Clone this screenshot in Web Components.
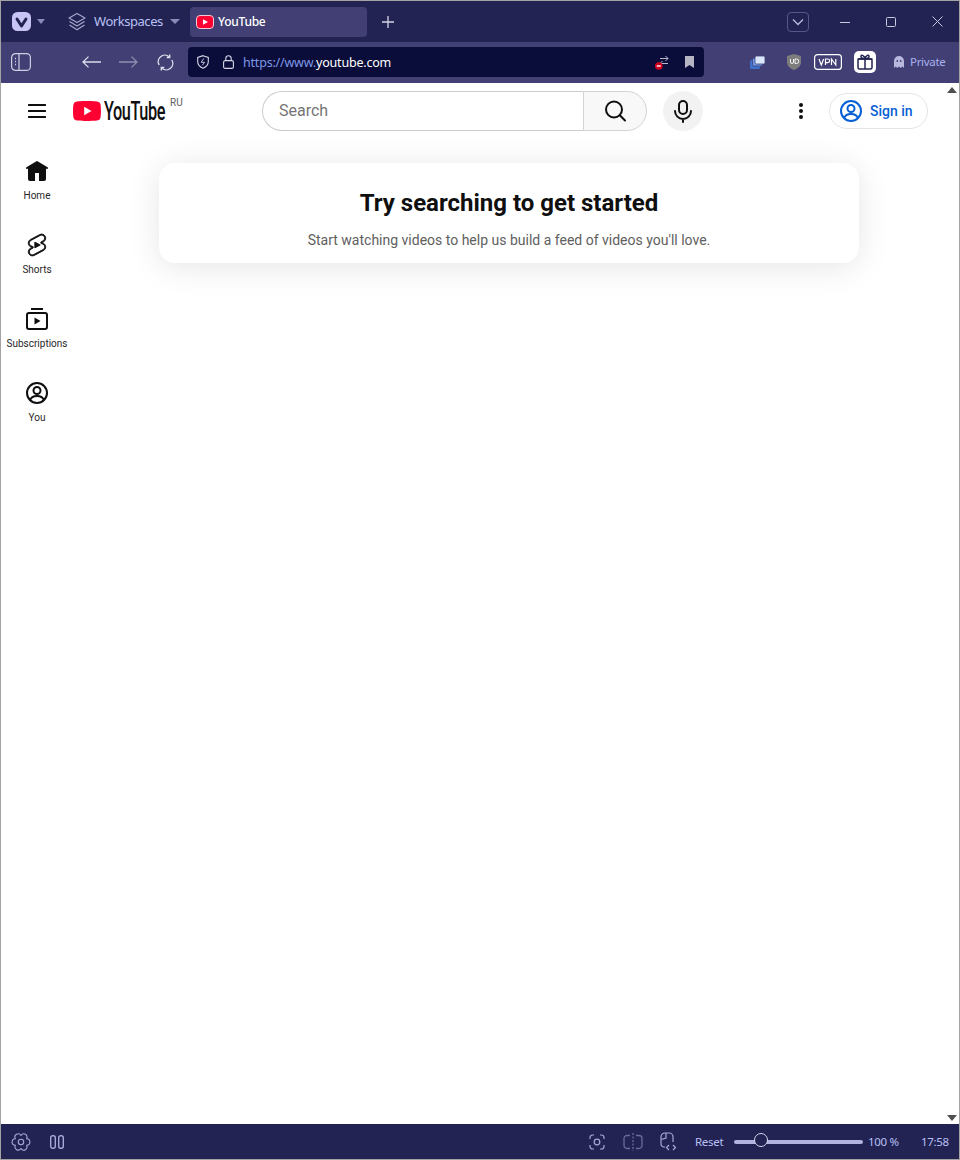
<!DOCTYPE html>
<html>
<head>
<meta charset="utf-8">
<title>YouTube</title>
<style>
  html, body { margin: 0; height: 100%; background: #fff; }
  browser-window { height: 1160px; }
</style>
</head>
<body>
<browser-window>
  <tab-bar slot="top"></tab-bar>
  <tool-bar slot="top"></tool-bar>
  <yt-page>
    <yt-masthead slot="head"></yt-masthead>
    <yt-guide slot="guide">
      <guide-item label="Home"><svg viewBox="0 0 24 24" fill="#0f0f0f"><path d="m11.485 2.143-8 4.8-2 1.2a1 1 0 001.03 1.714L3 9.567V20a2 2 0 002 2h5v-8h4v8h5a2 2 0 002-2V9.567l.485.29a1 1 0 001.03-1.714l-2-1.2-8-4.8a1 1 0 00-1.03 0Z"/></svg></guide-item>
      <guide-item label="Shorts"><svg viewBox="2.500 1 19 22" fill="#0f0f0f" stroke="#0f0f0f" stroke-width=".8"><path d="M10 14.65v-5.3L15 12l-5 2.65zm7.77-4.33c-.77-.32-1.2-.5-1.2-.5L18 9.06c1.84-.96 2.53-3.23 1.56-5.06s-3.24-2.53-5.07-1.56L6 6.94c-1.29.68-2.07 2.04-2 3.49.07 1.42.93 2.67 2.22 3.25.03.01 1.2.5 1.2.5L6 14.93c-1.83.97-2.53 3.24-1.56 5.07.97 1.83 3.24 2.53 5.07 1.56l8.5-4.5c1.29-.68 2.06-2.04 1.99-3.49-.07-1.42-.94-2.68-2.23-3.25zm-.23 5.86l-8.5 4.5c-1.34.71-3.01.2-3.72-1.14-.71-1.34-.2-3.01 1.14-3.72l2.04-1.08v-1.21l-.69-.28-1.11-.46c-.99-.41-1.65-1.35-1.7-2.41-.05-1.06.52-2.06 1.46-2.56l8.5-4.5c1.34-.71 3.01-.2 3.72 1.14.71 1.34.2 3.01-1.14 3.72L15.5 9.26v1.21l1.8.74c.99.41 1.65 1.35 1.7 2.41.05 1.06-.52 2.06-1.46 2.56z"/></svg></guide-item>
      <guide-item label="Subscriptions"><svg viewBox="0 0 24 24" fill="none" stroke="#0f0f0f" stroke-width="2"><path d="M6 2h12"/><rect x="2" y="6" width="20" height="16" rx="2"/><path d="M9.500 10.500v7l6-3.500z" fill="#0f0f0f" stroke="none"/></svg></guide-item>
      <guide-item label="You"><svg viewBox="0 0 24 24" fill="none" stroke="#0f0f0f" stroke-width="2"><circle cx="12" cy="12" r="10"/><circle cx="12" cy="9.500" r="3.500"/><path d="M5 19.500c1-3.500 3.500-4.500 7-4.500s6 1 7 4.500"/></svg></guide-item>
    </yt-guide>
    <feed-card slot="main" heading="Try searching to get started">Start watching videos to help us build a feed of videos you'll love.</feed-card>
  </yt-page>
  <status-bar slot="bottom"></status-bar>
</browser-window>

<script>
// every element gets its own shadow root, markup and styles live in the class
function setup(el, html) {
    el.attachShadow({ mode: 'open' });
    el.shadowRoot.innerHTML = html;
}

const YT_PLAY = `<path d="M27.400 3.100A3.500 3.500 0 0 0 25 .700C22.800 0 14 0 14 0S5.200 0 3 .700A3.500 3.500 0 0 0 .600 3.100C0 5.300 0 10 0 10s0 4.700.600 6.900A3.500 3.500 0 0 0 3 19.300C5.200 20 14 20 14 20s8.800 0 11-.700a3.500 3.500 0 0 0 2.400-2.400C28 14.700 28 10 28 10s0-4.700-.600-6.900Z" fill="#ff0033"/><path d="M11.200 14.300 18.500 10l-7.300-4.300Z" fill="#fff"/>`;

class BrowserWindow extends HTMLElement {
    constructor() {
        super();
        setup(this, `
      <style>
        :host { display: flex; flex-direction: column; box-sizing: border-box; border: 1px solid #a3a3a3; overflow: hidden; }
        .middle { flex: 1; min-height: 0; display: flex; }
      </style>
      <slot name="top"></slot>
      <div class="middle"><slot></slot></div>
      <slot name="bottom"></slot>`);
    }
}

class TabBar extends HTMLElement {
    constructor() {
        super();
        setup(this, `
      <style>
        :host { display: flex; align-items: center; height: 41px; background: #222352; color: #b9c0f5; font: 13px "Noto Sans", "Open Sans", sans-serif; }
        svg { display: block; flex: none; }
        .vivaldi { margin-left: 11px; }
        .caret { width: 0; height: 0; border: 4px solid transparent; border-top: 5px solid #8b8bb8; border-bottom: 0; flex: none; }
        .stack { margin-left: 23px; }
        .ws { margin-left: 8px; width: 68px; white-space: nowrap; letter-spacing: -.45px; margin-bottom: 2px; }
        .tab { margin-left: 10px; width: 177px; height: 30px; box-sizing: border-box; padding-left: 6px; display: flex; align-items: center; gap: 4px; background: #413f74; border-radius: 4px; color: #fff; font-size: 12px; font-weight: 500; letter-spacing: -.25px; }
        .plus { margin-left: 15px; }
        .push { flex: 1; }
        .drop { width: 22px; height: 20px; box-sizing: border-box; border: 1px solid #56568a; border-radius: 4px; display: flex; align-items: center; justify-content: center; margin-right: 13px; }
        .ctl { width: 46px; display: flex; justify-content: center; }
      </style>
      <svg class="vivaldi" width="19" height="19" viewBox="0 0 19 19"><rect width="19" height="19" rx="5.500" fill="#c8c5f5"/><path d="M5 7l4.500 7L14 7" fill="none" stroke="#222352" stroke-width="3" stroke-linecap="round" stroke-linejoin="round"/></svg>
      <span class="caret" style="margin-left:6px"></span>
      <svg class="stack" width="18" height="20" viewBox="0 0 18 20" fill="none" stroke="#a9a9cf" stroke-width="1.100" stroke-linejoin="round"><path d="M9 1.500 17 6l-8 4.500L1 6Z"/><path d="M1.500 9.500 9 14l7.500-4.500"/><path d="M1.500 13 9 17.800 16.500 13"/></svg>
      <span class="ws">Workspaces</span>
      <span class="caret" style="margin-left:8px;border-width:5px;border-bottom:0;border-top-color:#8b8bb8"></span>
      <div class="tab">
        <svg width="18" height="14" viewBox="0 0 18 14"><rect x=".500" y=".500" width="17" height="13" rx="3.500" fill="#ff0033" stroke="#f4c9d4"/><path d="M7 4.200 12 7 7 9.800Z" fill="#fff"/></svg>
        <span>YouTube</span>
      </div>
      <svg class="plus" width="12" height="12" viewBox="0 0 12 12" stroke="#d5d5e8" stroke-width="1.300"><path d="M6 0v12M0 6h12"/></svg>
      <span class="push"></span>
      <span class="drop"><svg width="12" height="8" viewBox="0 0 12 8" fill="none" stroke="#b9b9dc" stroke-width="1.400"><path d="M1 1.500l5 5 5-5"/></svg></span>
      <span class="ctl"><svg width="10" height="10" viewBox="0 0 10 10" stroke="#c9c9df"><path d="M0 5.500h10"/></svg></span>
      <span class="ctl"><svg width="10" height="10" viewBox="0 0 10 10" fill="none" stroke="#c9c9df"><rect x=".500" y=".500" width="9" height="9" rx="1"/></svg></span>
      <span class="ctl" style="margin-right:-1px"><svg width="11" height="11" viewBox="0 0 11 11" stroke="#c9c9df"><path d="M.500.500l10 10M10.500.500l-10 10"/></svg></span>`);
    }
}

class ToolBar extends HTMLElement {
    constructor() {
        super();
        setup(this, `
      <style>
        :host { display: flex; align-items: center; box-sizing: border-box; height: 41px; padding-bottom: 1px; background: #413f74; font: 13px "Noto Sans", "Open Sans", sans-serif; color: #b9c0f5; }
        svg { display: block; flex: none; }
        .url { margin-left: 14px; width: 516px; height: 30px; box-sizing: border-box; background: #0a0c3a; border-radius: 4px; display: flex; align-items: center; padding-left: 9px; }
        .addr { margin-left: 9px; flex: 1; font-size: 12.500px; letter-spacing: -.2px; color: #7f97e6; white-space: nowrap; }
        .addr b { font-weight: 400; color: #fff; }
        .private { margin: 0 0 2px 6px; font-size: 11.500px; color: #a9b2ee; letter-spacing: -.3px; }
      </style>
      <svg style="margin-left:10px" width="20" height="18" viewBox="0 0 20 18" fill="none" stroke="#cfcfe2" stroke-width="1.200"><rect x=".600" y=".600" width="18.800" height="16.800" rx="4"/><path d="M8 1v16"/><path d="M4 5.500h1M4 8.500h1M4 11.500h1" stroke-width="1.400"/></svg>
      <svg style="margin-left:51px" width="19" height="12" viewBox="0 0 19 12" fill="none" stroke="#dcdcea" stroke-width="1.300"><path d="M19 6H1M6.500.600 1 6l5.500 5.400"/></svg>
      <svg style="margin-left:18px" width="19" height="12" viewBox="0 0 19 12" fill="none" stroke="#8f8fb0" stroke-width="1.300"><path d="M0 6h18M12.500.600 18 6l-5.500 5.400"/></svg>
      <svg style="margin-left:19px" width="17" height="17" viewBox="0 0 17 17" fill="none" stroke="#dcdcea" stroke-width="1.400"><path d="M2.200 11A6.500 6.500 0 0 1 12 2.700M14.800 6A6.500 6.500 0 0 1 5 14.300"/><path d="M12.700.500v3h-3M4.300 16.500v-3h3" /></svg>
      <div class="url">
        <svg width="12" height="14" viewBox="0 0 12 14" fill="none" stroke="#d7d7e6" stroke-width="1.100"><path d="M6 .700 11.300 2.500v4c0 3.300-2.200 5.500-5.300 6.800C2.900 12 .700 9.800.700 6.500v-4Z"/><path d="M6.700 3.500 4.200 7.300h3.400l-2.300 3" stroke-width=".900"/></svg>
        <svg style="margin-left:14px" width="11" height="14" viewBox="0 0 11 14" fill="none" stroke="#d7d7e6" stroke-width="1.100"><rect x=".600" y="5.600" width="9.800" height="7.800" rx="1.500"/><path d="M2.800 5.500V3.500a2.700 2.700 0 0 1 5.400 0v2"/></svg>
        <span class="addr">https://www.<b>youtube.com</b></span>
        <svg width="14" height="15" viewBox="0 0 14 15" fill="none" stroke="#c9c9df" stroke-width=".900"><path d="M5 3.500h8M10.500 1l2.500 2.500L10.500 6M13 8.500H5M7.500 6 5 8.500"/><circle cx="3.800" cy="11" r="3.800" fill="#d1001f" stroke="none"/><path d="M1.800 11h4" stroke="#fff" stroke-width="1.400"/></svg>
        <svg style="margin-left:16px;margin-right:10px" width="9" height="12" viewBox="0 0 9 12"><path d="M0 0h9v12L4.500 9 0 12Z" fill="#b5b5c4"/></svg>
      </div>
      <svg style="margin-left:46px" width="15" height="13" viewBox="0 0 15 13"><rect x="0" y="4" width="10" height="9" rx="1.500" fill="#3e72c9"/><rect x="2.500" y="2" width="10" height="8" rx="1.500" fill="#6f9ce6" stroke="#413f74" stroke-width=".800"/><rect x="5" y="0" width="10" height="8" rx="1.500" fill="#dbe7fb" stroke="#413f74" stroke-width=".800"/></svg>
      <svg style="margin-left:22px" width="14" height="16" viewBox="0 0 14 16"><path d="M7 0 14 2v6c0 4-3 6.500-7 8-4-1.500-7-4-7-8V2Z" fill="#7d7d7d"/><path d="M3.500 5v3a1.500 1.500 0 0 0 3 0V5M8 5v4.500h1.500a2.200 2.200 0 0 0 0-4.500Z" fill="none" stroke="#fff" stroke-width=".900"/></svg>
      <svg style="margin-left:13px" width="28" height="16" viewBox="0 0 28 16"><rect x=".600" y=".600" width="26.800" height="14.800" rx="3" fill="none" stroke="#fff" stroke-width="1.200"/><path d="M5 5l2.300 6 2.300-6M11.500 11V5h2.300a1.700 1.700 0 0 1 0 3.600h-2.300M17.500 11V5l4.300 6V5" fill="none" stroke="#fff" stroke-width="1.200"/></svg>
      <svg style="margin-left:12px" width="22" height="22" viewBox="0 0 22 22"><rect width="22" height="22" rx="5" fill="#fff"/><g fill="none" stroke="#222352" stroke-width="1.500"><rect x="4" y="8" width="14" height="10" rx="1.500"/><path d="M3.500 8h15M11 8v10M11 7.500C8 7.500 6.500 6.500 7 5s3.300-.500 4 2.500c.700-3 3.500-4 4-2.500s-1 2.500-4 2.500Z"/></g></svg>
      <svg style="margin-left:18px" width="10" height="12" viewBox="0 0 10 12"><path d="M0 12V5a5 5 0 0 1 10 0v7l-1.700-1.500L6.700 12 5 10.500 3.300 12 1.700 10.500Z" fill="#b9b9e0"/><circle cx="3.300" cy="5" r=".900" fill="#413f74"/><circle cx="6.700" cy="5" r=".900" fill="#413f74"/></svg>
      <span class="private">Private</span>`);
    }
}

class YtPage extends HTMLElement {
    constructor() {
        super();
        setup(this, `
      <style>
        :host { display: flex; flex: 1; min-width: 0; background: #fff; }
        .content { flex: 1; min-width: 0; display: flex; flex-direction: column; }
        .row { flex: 1; display: flex; }
        .main { flex: 1; min-width: 0; display: flex; justify-content: center; align-items: flex-start; padding-top: 24px; }
        .scroll { width: 16px; box-sizing: border-box; padding: 4px 0 3px 2px; display: flex; flex-direction: column; justify-content: space-between; align-items: center; }
        .scroll i { width: 0; height: 0; border: 5px solid transparent; }
        .up { border-top: 0 !important; border-bottom: 6px solid #505050 !important; }
        .down { border-bottom: 0 !important; border-top: 6px solid #505050 !important; }
      </style>
      <div class="content">
        <slot name="head"></slot>
        <div class="row">
          <slot name="guide"></slot>
          <div class="main"><slot name="main"></slot></div>
        </div>
      </div>
      <div class="scroll"><i class="up"></i><i class="down"></i></div>`);
    }
}

class YtMasthead extends HTMLElement {
    constructor() {
        super();
        setup(this, `
      <style>
        :host { display: flex; align-items: center; height: 56px; font-family: Roboto, sans-serif; }
        svg { display: block; flex: none; }
        .logo { display: flex; align-items: center; margin-left: 27px; width: 110px; }
        .word { font: 500 25px Roboto, sans-serif; color: #0f0f0f; letter-spacing: -.6px; transform: scaleX(.65); transform-origin: left center; margin-left: 3px; width: 62px; white-space: nowrap; }
        .ru { font-size: 10px; line-height: 12px; color: #606060; align-self: flex-start; margin-left: 4px; }
        .box { margin-left: 79px; width: 321px; height: 40px; box-sizing: border-box; border: 1px solid #ccc; border-right: 0; border-radius: 20px 0 0 20px; padding: 0 0 2px 16px; display: flex; align-items: center; font-size: 16px; color: #757575; }
        .go { width: 64px; height: 40px; box-sizing: border-box; border: 1px solid #d3d3d3; border-radius: 0 20px 20px 0; background: #f8f8f8; display: flex; align-items: center; justify-content: center; }
        .mic { margin-left: 16px; width: 40px; height: 40px; border-radius: 50%; background: #f2f2f2; display: flex; align-items: center; justify-content: center; }
        .dots { margin-left: 96px; width: 4px; }
        .sign { margin-left: 26px; width: 99px; height: 36px; box-sizing: border-box; border: 1px solid #e5e5e5; border-radius: 18px; display: flex; align-items: center; padding-left: 9px; gap: 7px; color: #065fd4; font-size: 14px; font-weight: 500; }
      </style>
      <svg style="margin-left:27px" width="18" height="14" viewBox="0 0 18 14" fill="#0f0f0f"><rect width="18" height="2" y="0" rx=".5"/><rect width="18" height="2" y="6" rx=".5"/><rect width="18" height="2" y="12" rx=".5"/></svg>
      <div class="logo">
        <svg width="28" height="20" viewBox="0 0 28 20">${YT_PLAY}</svg>
        <span class="word">YouTube</span>
        <span class="ru">RU</span>
      </div>
      <div class="box">Search</div>
      <div class="go"><svg width="24" height="24" viewBox="0 0 24 24" fill="none" stroke="#0f0f0f" stroke-width="2"><circle cx="11" cy="10.500" r="8"/><path d="M16.800 16.300 22 21.500" stroke-linecap="round"/></svg></div>
      <div class="mic"><svg width="24" height="24" viewBox="0 0 24 24" fill="none" stroke="#0f0f0f" stroke-width="2"><rect x="8" y="2" width="8" height="13" rx="4"/><path d="M4 12a8 8 0 0 0 16 0M12 20v3" stroke-linecap="round"/></svg></div>
      <svg class="dots" width="4" height="16" viewBox="0 0 4 16" fill="#0f0f0f"><circle cx="2" cy="2" r="2"/><circle cx="2" cy="8" r="2"/><circle cx="2" cy="14" r="2"/></svg>
      <div class="sign"><svg width="24" height="24" viewBox="0 0 24 24" fill="none" stroke="#065fd4" stroke-width="2"><circle cx="12" cy="12" r="10"/><circle cx="12" cy="9.500" r="3.500"/><path d="M5 19.500c1-3.500 3.500-4.500 7-4.500s6 1 7 4.500"/></svg><span>Sign in</span></div>`);
    }
}

class YtGuide extends HTMLElement {
    constructor() {
        super();
        setup(this, `
      <style>:host { display: flex; flex-direction: column; flex: none; width: 74px; padding-top: 20px; }</style>
      <slot></slot>`);
    }
}

class GuideItem extends HTMLElement {
    constructor() {
        super();
        setup(this, `
      <style>
        :host { display: flex; flex-direction: column; align-items: center; width: 72px; height: 74px; font: 10px/14px Roboto, sans-serif; color: #272727; white-space: nowrap; }
        .icon { width: 24px; height: 24px; }
        ::slotted(svg) { display: block; width: 24px; height: 24px; }
        .label { margin-top: 6px; }
      </style>
      <div class="icon"><slot></slot></div>
      <div class="label"></div>`);
    }
    connectedCallback() {
        this.shadowRoot.querySelector('.label').textContent = this.getAttribute('label');
    }
}

class FeedCard extends HTMLElement {
    constructor() {
        super();
        setup(this, `
      <style>
        :host { display: block; box-sizing: border-box; width: 700px; height: 100px; background: #fff; border-radius: 16px; box-shadow: 0 4px 32px rgba(0,0,0,.1); text-align: center; font-family: Roboto, sans-serif; padding-top: 24px; }
        h2 { margin: 0; font-size: 24px; line-height: 32px; font-weight: 700; color: #0f0f0f; }
        p { margin: 11px 0 0; font-size: 14px; line-height: 20px; color: #606060; }
      </style>
      <h2></h2>
      <p><slot></slot></p>`);
    }
    connectedCallback() {
        this.shadowRoot.querySelector('h2').textContent = this.getAttribute('heading');
    }
}

class StatusBar extends HTMLElement {
    constructor() {
        super();
        setup(this, `
      <style>
        :host { display: flex; align-items: center; height: 35px; background: #222352; color: #b9c0f5; font: 11.500px "Noto Sans", "Open Sans", sans-serif; letter-spacing: -.3px; }
        svg { display: block; flex: none; }
        .push { flex: 1; }
        .reset { margin-left: 18px; width: 28px; white-space: nowrap; }
        .track { position: relative; margin-left: 11px; width: 129px; height: 4px; border-radius: 2px; background: #b3b3e0; }
        .knob { position: absolute; left: 20px; top: -7px; width: 14px; height: 14px; box-sizing: border-box; border: 1.300px solid #d5d5f0; border-radius: 50%; background: #222352; }
        .pct { margin-left: 5px; width: 36px; white-space: nowrap; }
        .time { margin-left: 17px; margin-right: 12px; width: 26px; white-space: nowrap; }
      </style>
      <svg style="margin-left:10px" width="20" height="18" viewBox="0 0 20 18" fill="none" stroke="#a8a8d8" stroke-width="1.100" stroke-linejoin="round"><path d="M10 2.500A3.250 3.250 0 0 1 15.630 5.750 3.250 3.250 0 0 1 15.630 12.250 3.250 3.250 0 0 1 10 15.500 3.250 3.250 0 0 1 4.370 12.250 3.250 3.250 0 0 1 4.370 5.750 3.250 3.250 0 0 1 10 2.500Z"/><circle cx="10" cy="9" r="2.700"/></svg>
      <svg style="margin-left:19px" width="14" height="14" viewBox="0 0 14 14" fill="none" stroke="#a8a8d8" stroke-width="1.400"><rect x=".700" y=".700" width="4.600" height="12.600" rx="2"/><rect x="8.700" y=".700" width="4.600" height="12.600" rx="2"/></svg>
      <span class="push"></span>
      <svg width="16" height="16" viewBox="0 0 16 16" fill="none" stroke="#a8a8d8" stroke-width="1.200"><path d="M1 5V3.500A2.500 2.500 0 0 1 3.500 1H5M11 1h1.500A2.500 2.500 0 0 1 15 3.500V5M15 11v1.500a2.500 2.500 0 0 1-2.500 2.500H11M5 15H3.500A2.500 2.500 0 0 1 1 12.500V11"/><circle cx="8" cy="8" r="2.800"/></svg>
      <svg style="margin-left:18px" width="20" height="18" viewBox="0 0 20 18" fill="none" stroke="#6a6a9c" stroke-width="1.300"><path d="M7 2.500H4A3 3 0 0 0 1 5.500v7a3 3 0 0 0 3 3h3M13 2.500h3a3 3 0 0 1 3 3v7a3 3 0 0 1-3 3h-3"/><path d="M10 0v18" stroke-dasharray="2 1.500"/></svg>
      <svg style="margin-left:17px" width="17" height="19" viewBox="0 0 17 19" fill="none" stroke="#a8a8d8" stroke-width="1.200"><path d="M5 15H4a3 3 0 0 1-3-3V5a4 4 0 0 1 4-4h4a4 4 0 0 1 4 4v5"/><path d="M6 1v5L1.500 7.500"/><path d="M9 13l-2.500 2.500L9 18M13 13l2.500 2.500L13 18"/></svg>
      <span class="reset">Reset</span>
      <div class="track"><div class="knob"></div></div>
      <span class="pct">100 %</span>
      <span class="time">17:58</span>`);
    }
}

customElements.define('browser-window', BrowserWindow);
customElements.define('tab-bar', TabBar);
customElements.define('tool-bar', ToolBar);
customElements.define('yt-page', YtPage);
customElements.define('yt-masthead', YtMasthead);
customElements.define('yt-guide', YtGuide);
customElements.define('guide-item', GuideItem);
customElements.define('feed-card', FeedCard);
customElements.define('status-bar', StatusBar);
</script>
</body>
</html>
